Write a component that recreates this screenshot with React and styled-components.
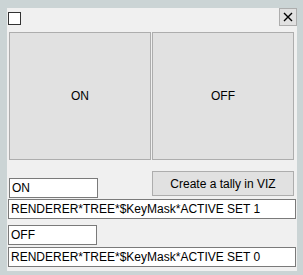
import React from 'react'
import styled, {createGlobalStyle} from 'styled-components'

const Global = createGlobalStyle`
  html, body { margin:0; padding:0; background:#cbd4d5; }
  body { font-family:"Liberation Sans", Arial, sans-serif; font-size:12px; color:#000; }
`

const Frame = styled.div`
  width:303px;
  height:275px;
  box-sizing:border-box;
  padding:8px 6px 4px 7px;
  background:#cbd4d5;
`

const Panel = styled.div`
  height:100%;
  background:#f0f0f0;
  display:flex;
  flex-direction:column;
`

const Header = styled.div`
  height:18px;
  display:flex;
  justify-content:space-between;
  align-items:flex-start;
`

const Check = styled.span`
  width:13px;
  height:13px;
  box-sizing:border-box;
  margin:4px 0 0 1px;
  border:1px solid #333;
  background:#fff;
`

const Close = styled.button`
  width:18px;
  height:18px;
  padding:0;
  box-sizing:border-box;
  border:1px solid #adadad;
  background:#e1e1e1;
  display:flex;
  align-items:center;
  justify-content:center;
`

const BigGrid = styled.div`
  margin:6px 3px 0 2px;
  display:grid;
  grid-template-columns:142px 142px;
  gap:1px;
  height:128px;
`

const Btn = styled.button`
  box-sizing:border-box;
  border:1px solid #adadad;
  background:#e1e1e1;
  font:inherit;
  color:#000;
  padding:0;
  height:${p => p.h || '100%'};
  width:${p => p.w || 'auto'};
`

const ActionRow = styled.div`
  margin:11px 3px 0 1px;
  display:flex;
  justify-content:space-between;
  align-items:flex-start;
`

const Field = styled.div`
  box-sizing:border-box;
  width:${p => p.w}px;
  height:20px;
  margin:${p => p.m || '0'};
  margin-left:1px;
  border:1px solid #7a7a7a;
  background:#fff;
  padding:0 2px;
  line-height:18px;
  white-space:nowrap;
  overflow:hidden;
`

export default function App(){
  return (
    <Frame>
      <Global />
      <Panel>
        <Header>
          <Check />
          <Close>
            <svg width="10" height="10" viewBox="0 0 10 10">
              <path d="M1 1L9 9M9 1L1 9" stroke="#000" strokeWidth="1.4" />
            </svg>
          </Close>
        </Header>
        <BigGrid>
          <Btn>ON</Btn>
          <Btn>OFF</Btn>
        </BigGrid>
        <ActionRow>
          <Field w={89} m="7px 0 0 0">ON</Field>
          <Btn w="142px" h="25px">Create a tally in VIZ</Btn>
        </ActionRow>
        <Field w={288} m="1px 0 0 0">RENDERER*TREE*$KeyMask*ACTIVE SET 1</Field>
        <Field w={89} m="6px 0 0 0">OFF</Field>
        <Field w={288} m="2px 0 0 0">RENDERER*TREE*$KeyMask*ACTIVE SET 0</Field>
      </Panel>
    </Frame>
  )
}
